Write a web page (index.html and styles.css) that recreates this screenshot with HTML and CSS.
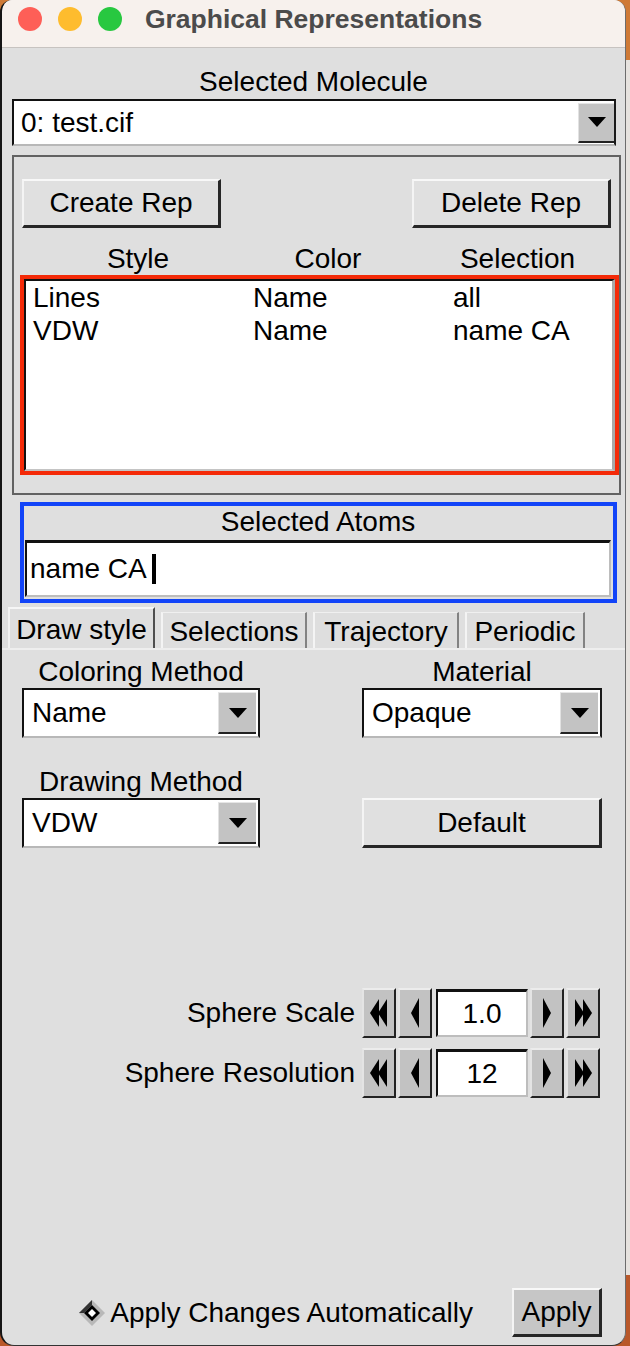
FILE: index.html
```html
<!DOCTYPE html>
<html>
<head>
<meta charset="utf-8">
<link rel="stylesheet" href="styles.css">
</head>
<body>
<div class="window">
  <div class="titlebar">
    <div class="lights">
      <span class="light red"></span><span class="light yellow"></span><span class="light green"></span>
    </div>
    <div class="title">Graphical Representations</div>
    <div></div>
  </div>
  <div class="content">
    <div class="label mol-label">Selected Molecule</div>
    <div class="combo combo-wide">
      <span class="combo-text">0: test.cif</span>
      <span class="combo-btn wide-btn"><svg width="18" height="10" viewBox="0 0 18 10"><polygon points="0,0 18,0 9,10" fill="#000"/></svg></span>
    </div>
    <div class="frame">
      <div class="btn-row">
        <div class="btn rep-btn">Create Rep</div>
        <div class="btn rep-btn">Delete Rep</div>
      </div>
      <div class="cols"><span>Style</span><span>Color</span><span class="col3">Selection</span></div>
      <div class="red-box">
        <div class="list">
          <div class="row"><span>Lines</span><span>Name</span><span>all</span></div>
          <div class="row"><span>VDW</span><span>Name</span><span>name CA</span></div>
        </div>
      </div>
    </div>
    <div class="blue-box">
      <div class="label atoms-label">Selected Atoms</div>
      <div class="entry"><span>name CA</span><span class="caret"></span></div>
    </div>
    <div class="tabs">
      <div class="tab active">Draw style</div>
      <div class="tab t2">Selections</div>
      <div class="tab t3">Trajectory</div>
      <div class="tab t4">Periodic</div>
      <div class="tab-fill"></div>
    </div>
    <div class="panel">
      <div class="grid">
        <div class="label glabel">Coloring Method</div>
        <div class="label glabel">Material</div>
        <div class="combo gcombo">
          <span class="combo-text">Name</span>
          <span class="combo-btn"><svg width="18" height="10" viewBox="0 0 18 10"><polygon points="0,0 18,0 9,10" fill="#000"/></svg></span>
        </div>
        <div class="combo gcombo">
          <span class="combo-text">Opaque</span>
          <span class="combo-btn"><svg width="18" height="10" viewBox="0 0 18 10"><polygon points="0,0 18,0 9,10" fill="#000"/></svg></span>
        </div>
        <div class="label glabel second">Drawing Method</div>
        <div class="label glabel second"></div>
        <div class="combo gcombo">
          <span class="combo-text">VDW</span>
          <span class="combo-btn"><svg width="18" height="10" viewBox="0 0 18 10"><polygon points="0,0 18,0 9,10" fill="#000"/></svg></span>
        </div>
        <div class="btn default-btn">Default</div>
      </div>

      <div class="spin-row first-spin">
        <span class="spin-label">Sphere Scale</span>
        <span class="sbtn"><svg width="20" height="28" viewBox="0 0 20 28"><polygon points="1,14 10,0 10,28" fill="#000"/><polygon points="9,14 18,0 18,28" fill="#000"/></svg></span>
        <span class="sbtn"><svg width="10" height="30" viewBox="0 0 10 30"><polygon points="1,15 9,0 9,30" fill="#000"/></svg></span>
        <span class="spin-entry">1.0</span>
        <span class="sbtn"><svg width="10" height="30" viewBox="0 0 10 30"><polygon points="9,15 1,0 1,30" fill="#000"/></svg></span>
        <span class="sbtn"><svg width="20" height="28" viewBox="0 0 20 28"><polygon points="19,14 10,0 10,28" fill="#000"/><polygon points="11,14 2,0 2,28" fill="#000"/></svg></span>
      </div>
      <div class="spin-row">
        <span class="spin-label">Sphere Resolution</span>
        <span class="sbtn"><svg width="20" height="28" viewBox="0 0 20 28"><polygon points="1,14 10,0 10,28" fill="#000"/><polygon points="9,14 18,0 18,28" fill="#000"/></svg></span>
        <span class="sbtn"><svg width="10" height="30" viewBox="0 0 10 30"><polygon points="1,15 9,0 9,30" fill="#000"/></svg></span>
        <span class="spin-entry">12</span>
        <span class="sbtn"><svg width="10" height="30" viewBox="0 0 10 30"><polygon points="9,15 1,0 1,30" fill="#000"/></svg></span>
        <span class="sbtn"><svg width="20" height="28" viewBox="0 0 20 28"><polygon points="19,14 10,0 10,28" fill="#000"/><polygon points="11,14 2,0 2,28" fill="#000"/></svg></span>
      </div>

      <div class="bottom-row">
        <svg class="diamond" width="28" height="28" viewBox="0 0 28 28">
          <polygon points="14,1 27,14 14,27 1,14" fill="#b8b8b8"/>
          <polygon points="14,1 1,14 6,14 14,6" fill="#333"/>
          <polygon points="14,6 22,14 14,22 6,14" fill="#000"/>
          <polygon points="14,10 18,14 14,18 10,14" fill="#fff"/>
        </svg>
        <span class="auto-text">Apply Changes Automatically</span>
        <div class="btn apply-btn">Apply</div>
      </div>
    </div>
  </div>
</div>
</body>
</html>
```
FILE: styles.css
```css
* { box-sizing: border-box; }
html, body { margin: 0; padding: 0; }
body {
  width: 630px;
  height: 1346px;
  overflow: hidden;
  background: linear-gradient(#cf7a36 0, #cf7a36 60px, #e6e2de 60px, #e6e2de 1275px, #b9582a 1275px);
  font-family: "Liberation Sans", Arial, Helvetica, sans-serif;
  font-size: 28px;
  color: #000;
}
.window {
  width: 626px;
  height: 1346px;
  background: #dfdfdf;
  border-left: 2px solid #151515;
  border-right: 1px solid #6c6c6c;
  border-bottom: 1px solid #333;
  border-radius: 12px 12px 14px 14px;
  overflow: hidden;
  display: flex;
  flex-direction: column;
}
.titlebar {
  height: 48px;
  flex: none;
  background: #f7f1ed;
  border-bottom: 1px solid #c7c3c0;
  display: grid;
  grid-template-columns: 1fr auto 1fr;
  align-items: center;
  padding-bottom: 10px;
}
.lights { display: flex; gap: 16px; padding-left: 16px; }
.light { width: 24px; height: 24px; border-radius: 50%; display: block; }
.red { background: #fe5f57; }
.yellow { background: #febc2e; }
.green { background: #28c840; }
.title {
  font-weight: bold;
  font-size: 26.5px;
  color: #4b4b4b;
  line-height: 30px;
}
.content {
  flex: 1;
  display: flex;
  flex-direction: column;
}
.label { line-height: 28px; height: 28px; text-align: center; white-space: nowrap; }
.mol-label { margin-top: 20px; }

.combo {
  display: flex;
  align-items: center;
  justify-content: space-between;
  background: #fff;
  border-top: 2px solid #111;
  border-left: 2px solid #111;
  border-right: 2px solid #1a1a1a;
  border-bottom: 2px solid #b8b8b8;
}
.combo-wide {
  margin: 3px 0 0 10px;
  width: 604px;
  height: 47px;
}
.combo-text { padding-left: 7px; line-height: 30px; }
.combo-btn {
  width: 38px;
  height: 42px;
  margin-right: 2px;
  background: #c3c3c3;
  border-top: 1px solid #e6e6e6;
  border-left: 1px solid #e2e2e2;
  border-bottom: 2px solid #222;
  display: flex;
  align-items: center;
  justify-content: center;
}
.combo-btn svg { display: block; }
.wide-btn { width: 36px; height: 40px; margin-right: 0; }

.frame {
  margin: 9px 0 0 10px;
  width: 609px;
  height: 340px;
  border: 2px solid #626262;
  padding: 22px 8px 0 8px;
}
.btn-row { display: flex; justify-content: space-between; }
.btn {
  background: #e0e0e0;
  border-top: 2px solid #f8f8f8;
  border-left: 2px solid #f4f4f4;
  border-right: 3px solid #262626;
  border-bottom: 3px solid #262626;
  display: flex;
  align-items: center;
  justify-content: center;
  white-space: nowrap;
}
.rep-btn { width: 199px; height: 49px; }
.cols {
  margin-top: 17px;
  height: 28px;
  line-height: 28px;
  display: grid;
  grid-template-columns: 232px 148px 1fr;
  text-align: center;
}
.col3 { padding-left: 22px; }
.red-box {
  margin: 2px 0 0 -2px;
  width: 599px;
  height: 200px;
  border: 4px solid #f42a08;
}
.list {
  height: 100%;
  background: #fff;
  border-top: 2px solid #111;
  border-left: 2px solid #111;
  border-right: 3px solid #a9a9a9;
  border-bottom: 2px solid #c4c4c4;
  padding-left: 7px;
}
.row {
  display: grid;
  grid-template-columns: 220px 200px 1fr;
  line-height: 33px;
  height: 33px;
  white-space: nowrap;
}

.blue-box {
  margin: 7px 0 0 18px;
  width: 597px;
  height: 101px;
  border: 4px solid #1244f8;
  padding: 0 2px 2px 1px;
}
.atoms-label { margin-top: 2px; }
.entry {
  margin-top: 4px;
  height: 57px;
  background: #fff;
  border-top: 3px solid #111;
  border-left: 2px solid #111;
  border-right: 2px solid #bdbdbd;
  border-bottom: 2px solid #bdbdbd;
  padding-left: 3px;
  display: flex;
  align-items: center;
}
.caret {
  display: inline-block;
  width: 4px;
  height: 30px;
  background: #000;
  margin-left: 5px;
}

.tabs {
  margin-top: 4px;
  height: 41px;
  display: flex;
  align-items: flex-end;
  padding-left: 6px;
}
.tab {
  display: flex;
  align-items: center;
  justify-content: center;
  white-space: nowrap;
  background: #dedede;
  line-height: 30px;
}
.active {
  width: 147px;
  height: 41px;
  border-top: 2px solid #f6f6f6;
  border-left: 2px solid #f3f3f3;
  border-right: 2px solid #4e4e4e;
  padding-top: 2px;
}
.t2, .t3, .t4 {
  height: 36px;
  margin-left: 6px;
  border-top: 1px solid #f0f0f0;
  border-left: 2px solid #f4f4f4;
  border-right: 2px solid #828282;
  padding-top: 2px;
}
.t2 { width: 146px; }
.t3 { width: 146px; }
.t4 { width: 120px; }
.tab-fill { flex: 1; }

.panel {
  flex: 1;
  display: flex;
  flex-direction: column;
  border-top: 2px solid #eeeeee;
}
.grid {
  display: grid;
  grid-template-columns: 238px 240px;
  column-gap: 102px;
  padding-left: 20px;
  margin-top: 8px;
}
.glabel.second { margin-top: 30px; }
.gcombo { height: 50px; margin-top: 2px; }
.gcombo .combo-text { padding-left: 8px; }
.default-btn { height: 50px; margin-top: 2px; }

.spin-row {
  display: flex;
  align-items: center;
  justify-content: flex-end;
  padding-right: 25px;
  height: 50px;
  margin-top: 10px;
}
.first-spin { margin-top: 140px; }
.spin-label { margin-right: 5px; white-space: nowrap; }
.sbtn {
  width: 34px;
  height: 50px;
  background: #c2c2c2;
  border-top: 2px solid #ececec;
  border-left: 2px solid #e4e4e4;
  border-right: 2px solid #222;
  border-bottom: 2px solid #222;
  display: flex;
  align-items: center;
  justify-content: center;
  margin-left: 2px;
}
.sbtn svg { display: block; }
.spin-entry {
  width: 92px;
  height: 48px;
  margin-left: 4px;
  background: #fff;
  border-top: 3px solid #111;
  border-left: 2px solid #111;
  border-right: 2px solid #bdbdbd;
  border-bottom: 2px solid #bdbdbd;
  display: flex;
  align-items: center;
  justify-content: center;
}

.bottom-row {
  margin-top: auto;
  margin-bottom: 8px;
  display: flex;
  align-items: center;
  justify-content: flex-end;
  padding-right: 23px;
}
.diamond { display: block; margin-right: 4px; }
.auto-text { white-space: nowrap; margin-right: 39px; }
.apply-btn {
  width: 90px;
  height: 49px;
  background: #c6c6c6;
}
```
